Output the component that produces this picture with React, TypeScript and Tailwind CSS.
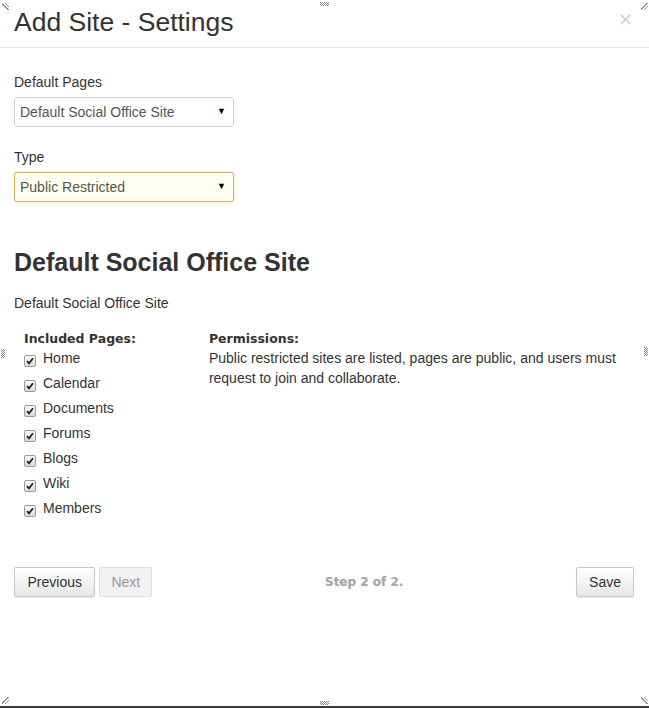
import React from "react";

const Check = () => (
  <span className="inline-flex w-[12px] h-[12px] items-center justify-center rounded-[2px] border border-[#9a9a9a] bg-gradient-to-b from-[#fafafa] to-[#dcdcdc]">
    <svg width="8" height="8" viewBox="0 0 8 8">
      <path d="M1 4.2 L3 6.4 L7 1.2" stroke="#222" strokeWidth="1.8" fill="none" />
    </svg>
  </span>
);

const Corner = ({ flip }: { flip?: string }) => (
  <svg width="7" height="7" viewBox="0 0 7 7" style={{ transform: flip }}>
    <path d="M0 6 L6 0 M0 7 L7 0 M3 7 L7 3" stroke="#777" strokeWidth="0.8" fill="none" />
  </svg>
);

const Dots = ({ w, h }: { w: number; h: number }) => (
  <svg width={w} height={h}>
    <defs>
      <pattern id={`p${w}${h}`} width="2" height="2" patternUnits="userSpaceOnUse">
        <rect width="1" height="1" fill="#888" />
        <rect x="1" y="1" width="1" height="1" fill="#888" />
      </pattern>
    </defs>
    <rect width={w} height={h} fill={`url(#p${w}${h})`} />
  </svg>
);

const pages = ["Home", "Calendar", "Documents", "Forums", "Blogs", "Wiki", "Members"];
const dv = { fontFamily: '"DejaVu Sans", Verdana, sans-serif' };

export default function App() {
  return (
    <div
      className="relative w-[649px] h-[708px] bg-white border-b-2 border-[#3a3a3a] text-[#333] overflow-hidden"
      style={{ fontFamily: '"Liberation Sans", Arial, sans-serif' }}
    >
      {/* handles */}
      <div className="absolute left-[2px] top-[3px]"><Corner flip="scaleY(-1)" /></div>
      <div className="absolute right-[1px] top-[3px]"><Corner /></div>
      <div className="absolute left-[2px] bottom-[2px]"><Corner /></div>
      <div className="absolute right-[1px] bottom-[2px]"><Corner flip="scaleY(-1)" /></div>
      <div className="absolute left-[320px] top-[2px]"><Dots w={9} h={4} /></div>
      <div className="absolute left-[320px] bottom-[1px]"><Dots w={9} h={4} /></div>
      <div className="absolute left-[1px] top-[349px]"><Dots w={4} h={9} /></div>
      <div className="absolute right-[1px] top-[347px]"><Dots w={4} h={9} /></div>

      <div className="h-[48px] border-b border-[#e5e5e5] flex items-center justify-between pl-[14px] pr-[16px]">
        <h1 className="text-[26.5px] leading-none text-[#333] mt-[-3px]">Add Site - Settings</h1>
        <span className="text-[18px] leading-none text-[#d0d0d0] mt-[-10px]" style={dv}>×</span>
      </div>

      <div className="pl-[14px] pr-[15px] pt-[26px]">
        <div className="text-[14px] leading-[16px] text-[#333]">Default Pages</div>
        <div className="mt-[7px] w-[220px] h-[30px] border border-[#cfcfcf] rounded-[4px] flex items-center justify-between pl-[5px] pr-[7px] text-[14px] text-[#555]">
          <span>Default Social Office Site</span>
          <span className="text-[9px] text-black">▼</span>
        </div>

        <div className="mt-[22px] text-[14px] leading-[16px] text-[#333]">Type</div>
        <div className="mt-[7px] w-[220px] h-[30px] border border-[#d8b25a] rounded-[3px] bg-[#fffef2] flex items-center justify-between pl-[5px] pr-[7px] text-[14px] text-[#555] shadow-[0_0_2px_rgba(216,178,90,0.6)]">
          <span>Public Restricted</span>
          <span className="text-[9px] text-black">▼</span>
        </div>

        <h2 className="mt-[46px] text-[25px] leading-[28px] font-bold text-[#333]">Default Social Office Site</h2>
        <div className="mt-[19px] text-[14px] leading-[16px]">Default Social Office Site</div>

        <div className="mt-[19px] flex pl-[10px]">
          <div className="w-[187px]">
            <div className="text-[12.5px] leading-[17px] font-bold text-[#333]" style={dv}>Included Pages:</div>
            <div className="mt-[-1px] flex flex-col">
              {pages.map((p) => (
                <div key={p} className="h-[25px] flex items-center gap-[7px] text-[14px]">
                  <span className="mt-[4px]"><Check /></span>
                  <span>{p}</span>
                </div>
              ))}
            </div>
          </div>
          <div className="w-[430px]">
            <div className="text-[12.5px] leading-[17px] font-bold text-[#333]" style={dv}>Permissions:</div>
            <p className="mt-[1px] text-[14px] leading-[20px] text-[#333]">
              Public restricted sites are listed, pages are public, and users must request to join and collaborate.
            </p>
          </div>
        </div>

        <div className="mt-[46px] flex items-center">
          <button className="h-[30px] px-[12.5px] border border-[#c8c8c8] rounded-[2px] bg-gradient-to-b from-white to-[#e6e6e6] text-[14px] text-[#333] shadow-[0_1px_1px_rgba(0,0,0,0.08)]">
            Previous
          </button>
          <button className="ml-[4px] h-[30px] px-[11px] border border-[#dedede] rounded-[2px] bg-[#f2f2f2] text-[14px] text-[#999]">
            Next
          </button>
          <div
            className="flex-1 text-center text-[12px] font-bold text-[#a8a8a8]"
            style={{ ...dv, textShadow: "0 0 1px #cfcfcf" }}
          >
            Step 2 of 2.
          </div>
          <button className="h-[30px] px-[12px] border border-[#c8c8c8] rounded-[2px] bg-gradient-to-b from-white to-[#e6e6e6] text-[14px] text-[#333] shadow-[0_1px_1px_rgba(0,0,0,0.08)]">
            Save
          </button>
        </div>
      </div>
    </div>
  );
}
